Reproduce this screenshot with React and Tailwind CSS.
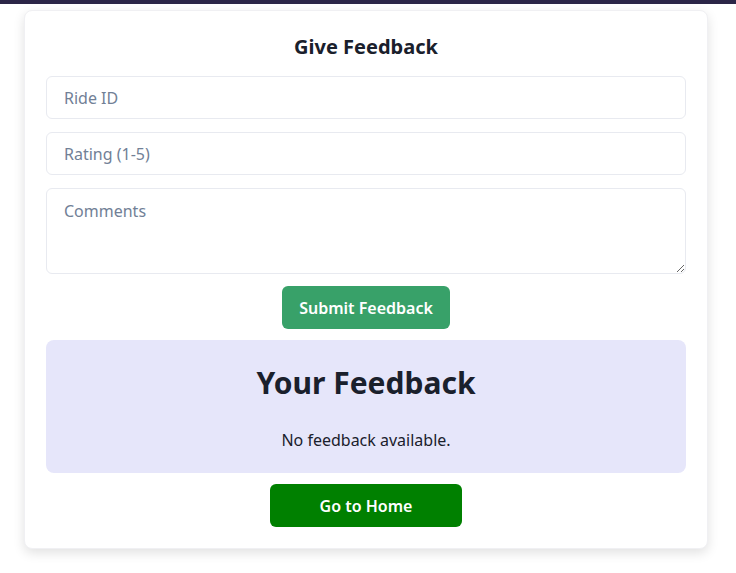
export default function App() {
  return (
    <div className="min-h-[573px] bg-white" style={{ fontFamily: '"Noto Sans", "Open Sans", sans-serif' }}>
      <div className="h-[4px] bg-[#2b2547]" />
      <div className="pl-[24px] pt-[6px]">
        <div className="w-[684px] rounded-[8px] bg-white border border-[#f0f0f3] shadow-[0_4px_12px_rgba(0,0,0,0.12)] px-[21px] pt-[22px] pb-[21px] flex flex-col">
          <h2 className="text-center text-[20px] font-bold text-[#1a202c] leading-[28px] mb-[15px]">Give Feedback</h2>
          <input className="h-[43px] rounded-[6px] border border-[#e8eaf0] px-[17px] text-[16px] text-[#4a5568] placeholder:text-[#718096] outline-none mb-[13px]" placeholder="Ride ID" />
          <input className="h-[43px] rounded-[6px] border border-[#e8eaf0] px-[17px] text-[16px] text-[#4a5568] placeholder:text-[#718096] outline-none mb-[13px]" placeholder="Rating (1-5)" />
          <textarea className="h-[86px] rounded-[6px] border border-[#e8eaf0] px-[17px] py-[10px] text-[16px] text-[#4a5568] placeholder:text-[#718096] outline-none" placeholder="Comments" />
          <div className="flex justify-center mt-[12px]">
            <button className="h-[43px] w-[168px] rounded-[6px] bg-[#38a169] text-white font-semibold text-[16px]">Submit Feedback</button>
          </div>
          <div className="mt-[11px] rounded-[8px] bg-[#e6e6fa] h-[133px] flex flex-col items-center pt-[23px]">
            <h2 className="text-[30px] font-bold text-[#1a202c] leading-[40px]">Your Feedback</h2>
            <p className="mt-[25px] text-[16px] text-[#1a202c]">No feedback available.</p>
          </div>
          <div className="flex justify-center mt-[11px]">
            <button className="h-[43px] w-[192px] rounded-[6px] bg-[#008000] text-white font-semibold text-[16px]">Go to Home</button>
          </div>
        </div>
      </div>
    </div>
  );
}
